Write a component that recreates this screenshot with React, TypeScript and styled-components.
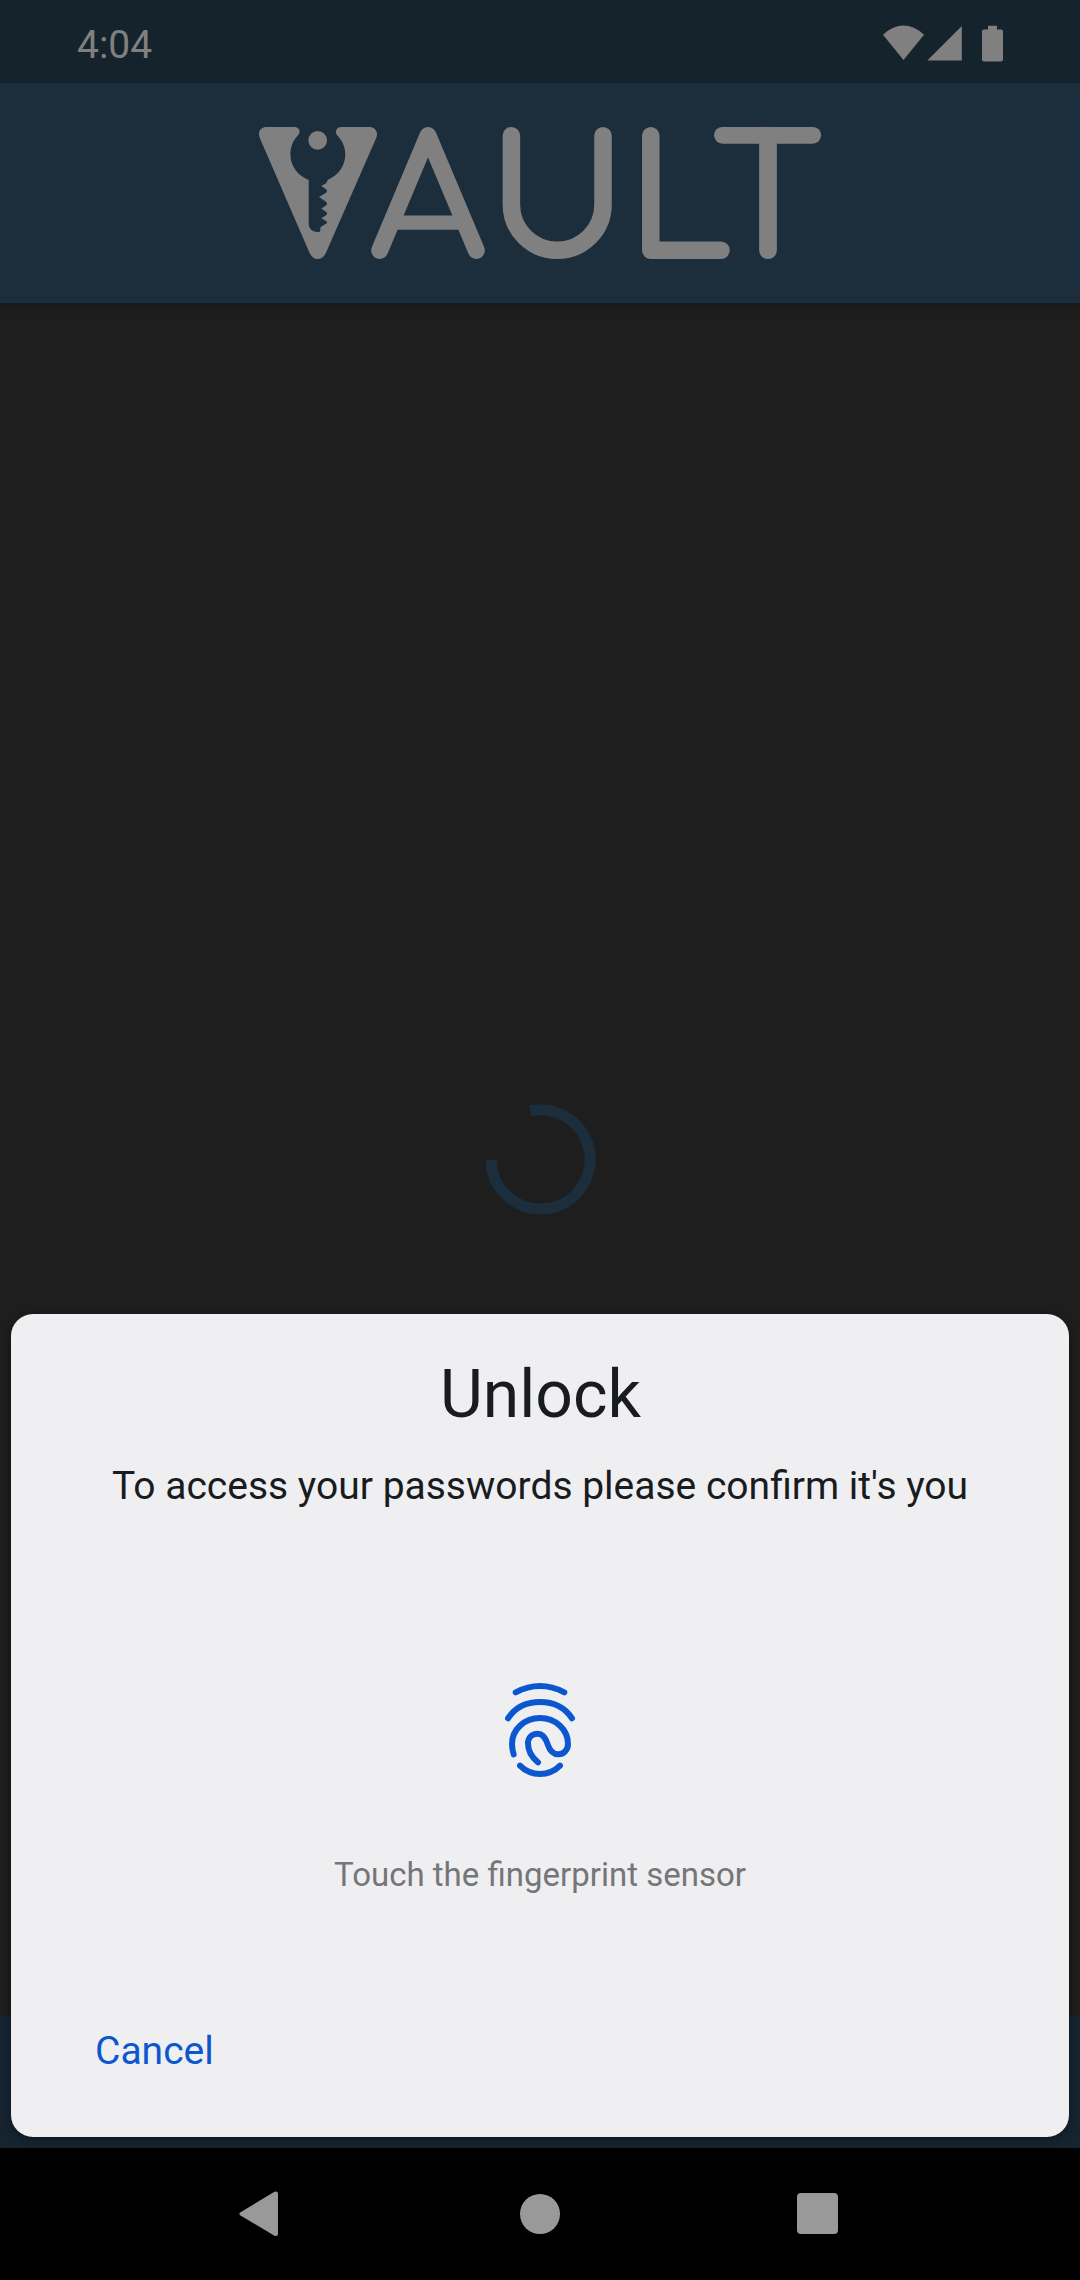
import React from "react";
import styled, { createGlobalStyle } from "styled-components";

const GlobalStyle = createGlobalStyle`
  * { box-sizing: border-box; }
  body { margin: 0; background: #1e1e1e; }
  svg { display: block; }
`;

const Screen = styled.div`
  position: relative;
  display: flex;
  flex-direction: column;
  width: 1080px;
  height: 2280px;
  overflow: hidden;
  background: #1e1e1e;
  font-family: Roboto, "Noto Sans", sans-serif;
`;

const StatusBar = styled.header`
  display: flex;
  align-items: center;
  justify-content: space-between;
  height: 83px;
  padding: 5px 76px 0 77px;
  background: #15232d;
  color: #808080;
  font-size: 39px;
`;

const Clock = styled.time`
  padding-top: 1px;
  line-height: 46px;
`;

const AppBar = styled.div`
  display: flex;
  justify-content: center;
  height: 220px;
  padding-top: 42px;
  background: #1c2e3c;
  box-shadow: 0 3px 10px rgba(0, 0, 0, 0.2);
`;

const Content = styled.main`
  display: flex;
  flex: 1;
  align-items: center;
  justify-content: center;
`;

const BottomBar = styled.div`
  height: 132px;
  background: #162430;
`;

const NavigationBar = styled.nav`
  display: flex;
  justify-content: center;
  height: 132px;
  background: #000;
`;

const NavButton = styled.button`
  display: flex;
  align-items: center;
  justify-content: center;
  width: 278px;
  padding: 0;
  border: 0;
  background: none;
  color: #999;
`;

const Sheet = styled.section`
  position: absolute;
  left: 11px;
  right: 11px;
  bottom: 143px;
  display: flex;
  flex-direction: column;
  align-items: center;
  height: 823px;
  padding-top: 42px;
  border-radius: 22px;
  background: #efeff2;
  color: #191c1e;
  box-shadow: 0 2px 8px rgba(0, 0, 0, 0.4);
`;

const Title = styled.h1`
  margin: 0;
  padding-left: 1px;
  font-size: 66px;
  font-weight: 400;
  line-height: 78px;
`;

const Subtitle = styled.p`
  margin: 29px 0 0;
  font-size: 39px;
  line-height: 46px;
`;

const SensorIcon = styled.div`
  margin-top: 173px;
  color: #0b57d0;
`;

const Hint = styled.p`
  margin: 77px 0 0;
  color: #757677;
  font-size: 33px;
  line-height: 40px;
`;

const CancelButton = styled.button`
  align-self: flex-start;
  margin: 133px 0 0 84px;
  padding: 0;
  border: 0;
  background: none;
  color: #0b57d0;
  font: inherit;
  font-size: 39px;
  line-height: 46px;
`;

const StatusIcons = () => (
  <svg width="122" height="38" viewBox="882 24.5 122 38" fill="currentColor">
    <path d="M883 34.2Q903.5 16 924 34.2L903.5 59.4Z" />
    <path d="M927.3 60L961.8 25.5V60Z" />
    <path d="M988 25.2h9v3.8h4q2 0 2 2v28q0 2-2 2h-17q-2 0-2-2v-28q0-2 2-2h4z" />
  </svg>
);

const VaultLogo = () => (
  <svg width="564" height="136" viewBox="258 125 564 136" fill="none" stroke="#808080" strokeLinecap="round" strokeLinejoin="round">
    <g fill="#808080" stroke="none">
      <path d="M266 127H294.5Q298 127 299.3 130Q300.3 133 298 135.3C293 140.5 290.4 147 290.4 154.3C290.4 166 297.5 175.5 308.7 180V224C308.7 229 313 232 317.5 232Q320.3 232.3 320.3 230.5V228L321 226.8L326 223.7Q328 222.5 326 221L321.3 218.3L326 215.2Q328 213.3 326 211.7L321.3 208.5L326 205.5Q328 203.5 326 201.7L319 197L326 192.8Q328 191 326 189.2L321.3 186L326 183.2Q327 182.3 327.3 180.7L328 179.7C338.3 175.5 345.3 166 345.3 154.3C345.3 147 342.3 140.5 337.2 135.3Q335.2 133 336.3 130Q337.6 127 341 127H369.5Q374 127 376 130.5Q378 134 376 138.5L326.3 252Q323.5 259 317.7 259Q312 259 309.2 252L260 138.5Q258 133.5 259.8 130.5Q262 127 266 127Z" />
      <circle cx="317.7" cy="140.4" r="9.3" />
    </g>
    <path d="M379.7 250.4L428 135.5L476.3 250.4" strokeWidth="17" />
    <path d="M393 222.6H463" strokeWidth="14.4" strokeLinecap="butt" />
    <path d="M511.4 135.7V204.5A45.8 45.8 0 0 0 603 204.5V135.7" strokeWidth="17.5" />
    <path d="M650.8 135.7V250.2H721" strokeWidth="17.5" />
    <path d="M722.5 135.3H812.7" strokeWidth="16.8" />
    <path d="M768 135.7V250.2" strokeWidth="17.7" />
  </svg>
);

const Spinner = () => (
  <svg width="112" height="112" viewBox="-0.3 0.4 112 112" fill="none" stroke="#1c2e3c" strokeWidth="11">
    <path d="M46.2 7.4A49.5 49.5 0 1 1 6.8 56.5" />
  </svg>
);

const Fingerprint = () => (
  <svg width="72" height="96" viewBox="72 66 216 288" fill="none" stroke="currentColor" strokeWidth="18" strokeLinecap="round">
    <path d="M107 97Q180 59 253 97" />
    <path d="M84 175C105 143 140 126 180 126S255 143 276 175" />
    <path d="M101 283C97 270 96 262 96 252C96 208 134 174 180 174C226 174 264 208 264 252C264 270 251 283 235 283C216 283 208 268 203 253C197 234 190 221 173 221C156 221 144 233 144 250C144 274 155 292 174 307" />
    <path d="M120 317C137 334 157 342 180 342S223 334 240 317" />
  </svg>
);

const BackIcon = () => (
  <svg width="46" height="46" viewBox="0 0 46 46" fill="currentColor">
    <path d="M1.5 21.2L35.5 .8Q39 -.5 39 3V42.5Q39 46 35.5 44.7L1.5 24.6Q-.8 22.9 1.5 21.2Z" />
  </svg>
);

const HomeIcon = () => (
  <svg width="40" height="40" viewBox="0 0 40 40" fill="currentColor">
    <circle cx="20" cy="20" r="20" />
  </svg>
);

const RecentsIcon = () => (
  <svg width="42" height="42" viewBox="0 0 42 42" fill="currentColor">
    <rect width="41" height="41" rx="4" />
  </svg>
);

export default function App() {
  return (
    <Screen>
      <GlobalStyle />
      <StatusBar>
        <Clock>4:04</Clock>
        <StatusIcons />
      </StatusBar>
      <AppBar>
        <VaultLogo />
      </AppBar>
      <Content>
        <Spinner />
      </Content>
      <BottomBar />
      <NavigationBar>
        <NavButton aria-label="Back"><BackIcon /></NavButton>
        <NavButton aria-label="Home"><HomeIcon /></NavButton>
        <NavButton aria-label="Recents"><RecentsIcon /></NavButton>
      </NavigationBar>
      <Sheet role="dialog">
        <Title>Unlock</Title>
        <Subtitle>To access your passwords please confirm it's you</Subtitle>
        <SensorIcon><Fingerprint /></SensorIcon>
        <Hint>Touch the fingerprint sensor</Hint>
        <CancelButton>Cancel</CancelButton>
      </Sheet>
    </Screen>
  );
}
